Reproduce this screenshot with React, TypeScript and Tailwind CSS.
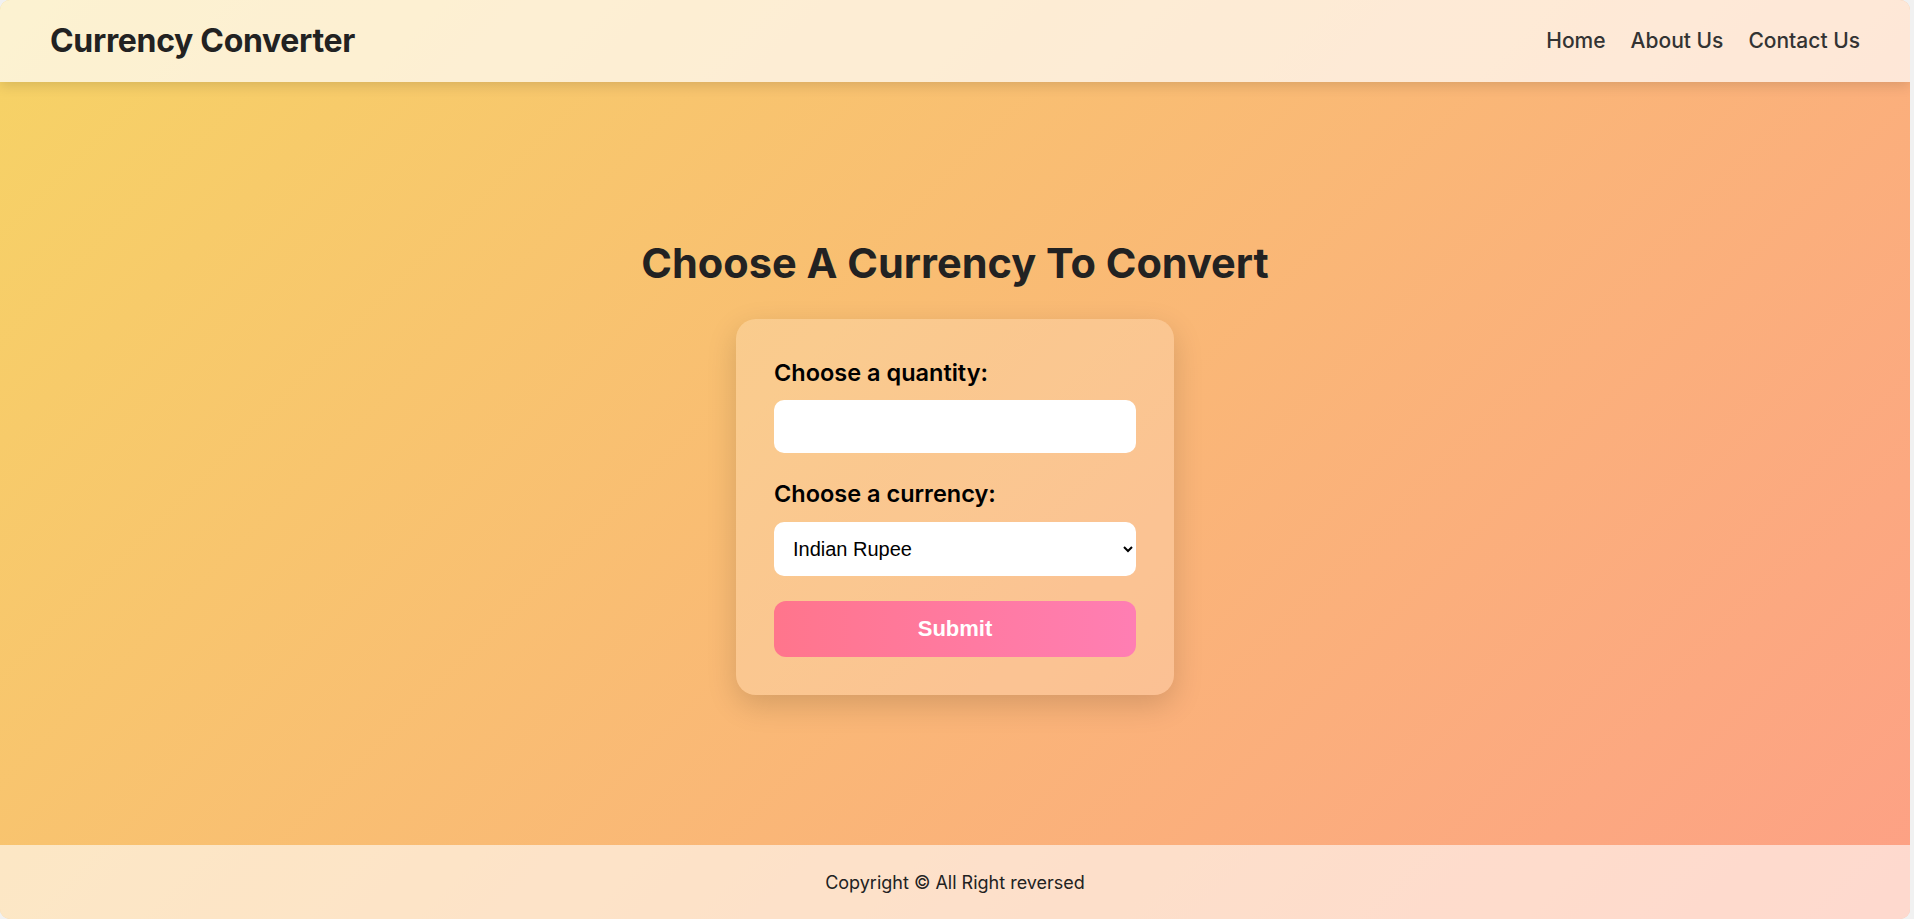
import React from "react";

export default function App() {
  return (
    <div className="h-[919px] w-full bg-[#f1f1f1]">
      <div className="flex h-full w-[1910px] flex-col overflow-hidden rounded-[10px] bg-[linear-gradient(135deg,#f6d365_0%,#fda085_100%)] font-['Inter',sans-serif]">
        <header className="relative z-10 flex h-[82px] shrink-0 items-center justify-between bg-white/70 px-[50px] shadow-[0_4px_12px_rgba(0,0,0,0.12)]">
          <div className="text-[32px] font-bold tracking-[-0.01em] text-[#222]">Currency Converter</div>
          <nav className="flex items-center gap-[25px] text-[21px] font-medium text-[#333]">
            <a href="#">Home</a>
            <a href="#">About Us</a>
            <a href="#">Contact Us</a>
          </nav>
        </header>

        <main className="flex flex-1 flex-col items-center justify-center">
          <h1 className="text-[41.5px] leading-[60px] font-bold text-[#222]">Choose A Currency To Convert</h1>
          <form
            className="mt-[26px] w-[438px] rounded-[20px] bg-white/20 p-[38px] shadow-[0_10px_30px_rgba(0,0,0,0.15)]"
            onSubmit={(e) => e.preventDefault()}
          >
            <label className="mb-[11px] block text-[23.5px] leading-[32px] font-semibold text-black">
              Choose a quantity:
            </label>
            <input
              type="number"
              className="mb-[25px] block h-[53px] w-full rounded-[10px] bg-white px-5 font-['Liberation_Sans',Arial,sans-serif] text-[20px] outline-none"
            />
            <label className="mb-[12px] block text-[23.5px] leading-[32px] font-semibold text-black">
              Choose a currency:
            </label>
            <select className="mb-[25px] block h-[54px] w-full rounded-[10px] bg-white pl-[15px] pr-[6px] font-['Liberation_Sans',Arial,sans-serif] text-[20px] text-black outline-none">
              <option>Indian Rupee</option>
              <option>US Dollar</option>
              <option>Euro</option>
              <option>British Pound</option>
            </select>
            <button
              type="submit"
              className="block h-[56px] w-full rounded-[12px] bg-[linear-gradient(to_right,#ff758c,#ff7eb3)] font-['Liberation_Sans',Arial,sans-serif] text-[22px] font-bold text-white"
            >
              Submit
            </button>
          </form>
        </main>

        <footer className="flex h-[74px] shrink-0 items-center justify-center bg-white/60 text-[18px] text-[#222]">
          Copyright © All Right reversed
        </footer>
      </div>
    </div>
  );
}
